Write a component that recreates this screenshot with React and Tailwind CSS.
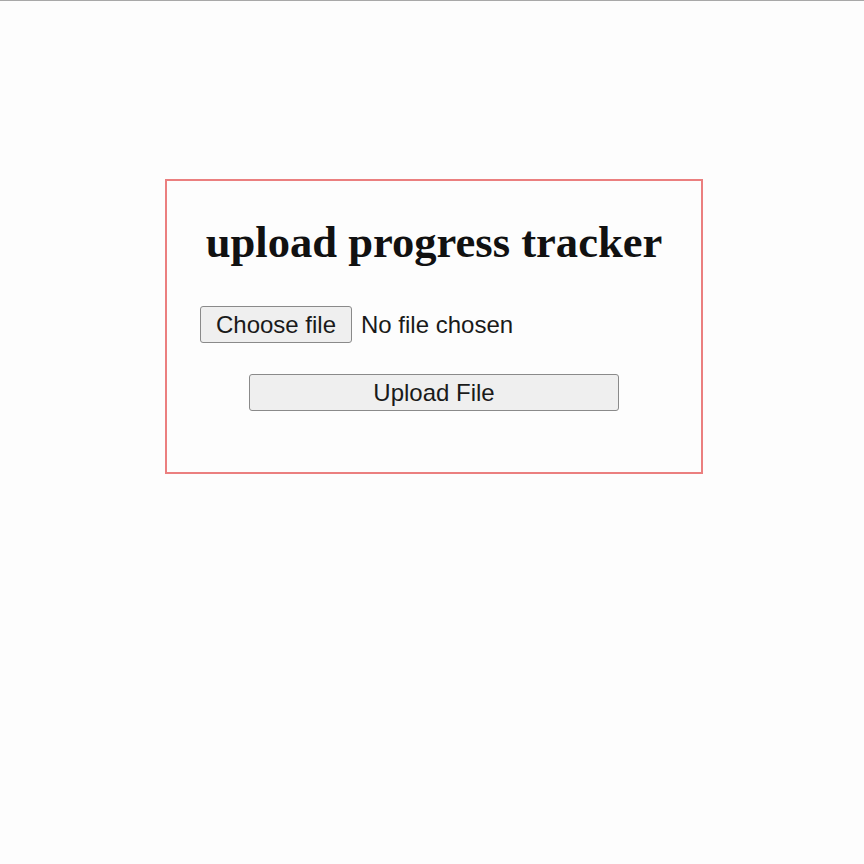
import React from "react";

const App = () => {
  return (
    <div className="w-full min-h-[864px] bg-[#fdfdfd] border-t border-[#a8a8a8] flex justify-center pl-[4px] pt-[178px]">
      <div className="w-[538px] h-[295px] border-2 border-[#eb7f7f] flex flex-col items-center pt-[38px] px-[33px]">
        <h1 className="font-['Liberation_Serif',serif] font-bold text-[44.6px] leading-[46px] text-[#111] whitespace-nowrap">
          upload progress tracker
        </h1>
        <div className="w-full flex items-center mt-[41px] font-['Liberation_Sans',Arial,sans-serif] text-[24px] text-[#1a1a1a]">
          <label className="h-[37px] w-[152px] flex items-center justify-center bg-[#efefef] border border-[#8a8a8a] rounded-[3px] cursor-pointer">
            Choose file
            <input type="file" className="hidden" />
          </label>
          <span className="ml-[9px]">No file chosen</span>
        </div>
        <button className="mt-[31px] h-[37px] w-[370px] bg-[#efefef] border border-[#8a8a8a] rounded-[3px] font-['Liberation_Sans',Arial,sans-serif] text-[24px] text-[#1a1a1a]">
          Upload File
        </button>
      </div>
    </div>
  );
};

export default App;
